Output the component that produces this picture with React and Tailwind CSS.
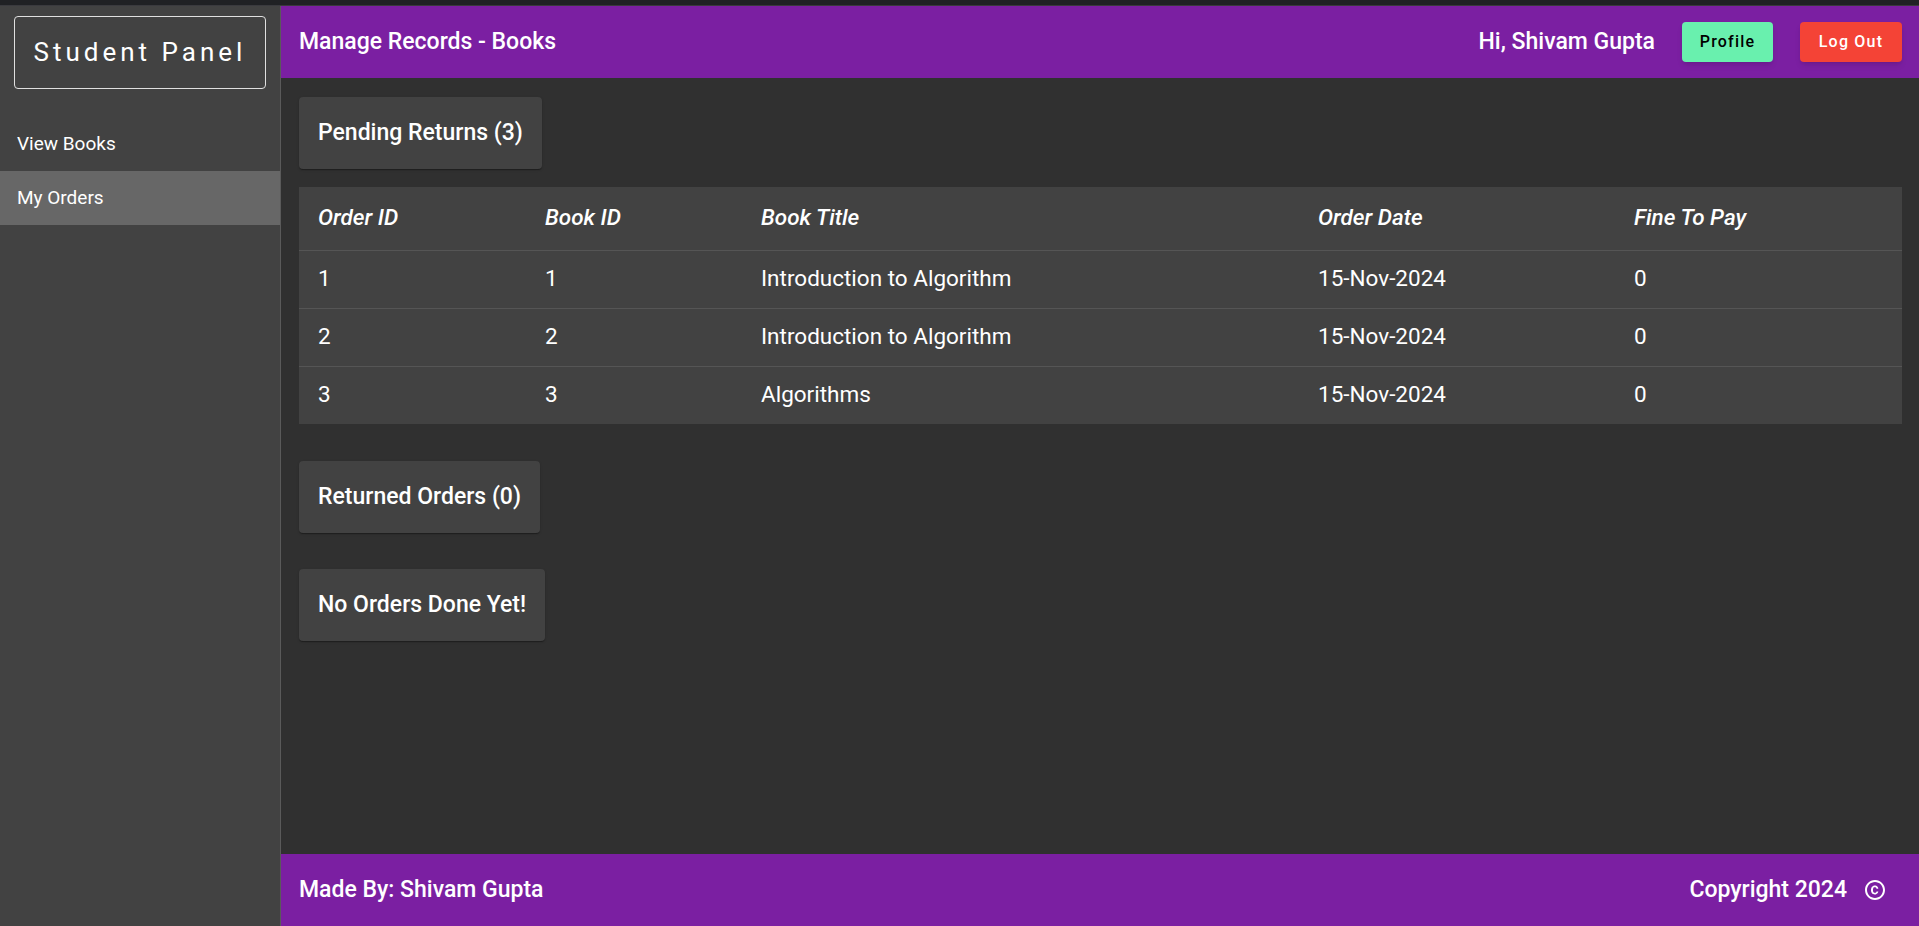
import React from 'react';

const orders = [
  { orderId: 1, bookId: 1, title: 'Introduction to Algorithm', date: '15-Nov-2024', fine: 0 },
  { orderId: 2, bookId: 2, title: 'Introduction to Algorithm', date: '15-Nov-2024', fine: 0 },
  { orderId: 3, bookId: 3, title: 'Algorithms', date: '15-Nov-2024', fine: 0 },
];

function CopyrightIcon() {
  return (
    <svg viewBox="0 0 24 24" className="w-6 h-6" fill="currentColor">
      <path d="M10.08 10.86c.05-.33.16-.62.3-.87s.34-.46.59-.62c.24-.15.54-.22.91-.23.23.01.44.05.63.13.2.09.38.21.52.36s.25.33.34.53.13.42.14.64h1.79c-.02-.47-.11-.9-.28-1.29s-.4-.73-.7-1.01-.66-.5-1.08-.66-.88-.23-1.39-.23c-.65 0-1.22.11-1.7.34s-.88.53-1.2.92-.56.84-.71 1.36S8 11.29 8 11.87v.27c0 .58.08 1.12.23 1.64s.39.97.71 1.35.72.69 1.2.91c.48.22 1.05.34 1.7.34.47 0 .91-.08 1.32-.23s.77-.36 1.08-.63.56-.58.74-.94.29-.74.3-1.15h-1.79c-.01.21-.06.4-.15.58s-.21.33-.36.46-.32.23-.52.3c-.19.07-.39.09-.6.1-.36-.01-.66-.08-.89-.23-.25-.16-.45-.37-.59-.62s-.25-.55-.3-.88-.08-.67-.08-1v-.27c0-.35.03-.68.08-1.01zM12 2C6.48 2 2 6.48 2 12s4.48 10 10 10 10-4.48 10-10S17.52 2 12 2zm0 18c-4.41 0-8-3.59-8-8s3.59-8 8-8 8 3.59 8 8-3.59 8-8 8z" />
    </svg>
  );
}

function Sidebar() {
  return (
    <aside className="w-[281px] shrink-0 bg-[#424242] border-r border-[#5a5a5a] flex flex-col">
      <div className="mx-[14px] mt-[10px] h-[73px] border border-[#e0e0e0] rounded-[4px] flex items-center justify-center">
        <span className="text-white text-[26px] tracking-[4px]">Student Panel</span>
      </div>
      <nav className="mt-[28px] flex flex-col">
        <a className="h-[54px] flex items-center pl-[17px] text-white text-[19px]">View Books</a>
        <a className="h-[54px] flex items-center pl-[17px] text-white text-[19px] bg-[#676767]">My Orders</a>
      </nav>
    </aside>
  );
}

function Header() {
  return (
    <header className="h-[72px] shrink-0 bg-[#7b1fa2] flex items-center pl-[18px] pr-[17px]">
      <h1 className="text-white text-[23px] font-medium">Manage Records - Books</h1>
      <div className="ml-auto flex items-center gap-[27px]">
        <span className="text-white text-[23px] font-medium">Hi, Shivam Gupta</span>
        <button className="h-10 w-[91px] rounded-[4px] bg-[#69f0ae] text-black text-base font-medium tracking-[1.2px] shadow-md">
          Profile
        </button>
        <button className="h-10 w-[102px] rounded-[4px] bg-[#f44336] text-white text-base font-medium tracking-[1.2px] shadow-md">
          Log Out
        </button>
      </div>
    </header>
  );
}

function Card({ children }) {
  return (
    <div className="self-start h-[72px] px-[19px] flex items-center bg-[#424242] rounded-[4px] shadow-[0_2px_1px_-1px_rgba(0,0,0,0.2),0_1px_1px_0_rgba(0,0,0,0.14),0_1px_3px_0_rgba(0,0,0,0.12)]">
      <span className="text-white text-[23px] font-medium">{children}</span>
    </div>
  );
}

function OrdersTable() {
  const cols = ['w-[227px]', 'w-[216px]', 'w-[557px]', 'w-[316px]', ''];
  const heads = ['Order ID', 'Book ID', 'Book Title', 'Order Date', 'Fine To Pay'];
  return (
    <table className="w-full bg-[#424242] text-white text-[22.5px] border-collapse table-fixed">
      <thead>
        <tr className="h-[63px] border-b border-[#555555]">
          {heads.map((h, i) => (
            <th key={h} className={`${cols[i]} text-left pl-[19px] italic font-medium`}>{h}</th>
          ))}
        </tr>
      </thead>
      <tbody>
        {orders.map((o, i) => (
          <tr key={o.orderId} className={`h-[58px] ${i < orders.length - 1 ? 'border-b border-[#555555]' : ''}`}>
            <td className="pl-[19px]">{o.orderId}</td>
            <td className="pl-[19px]">{o.bookId}</td>
            <td className="pl-[19px]">{o.title}</td>
            <td className="pl-[19px]">{o.date}</td>
            <td className="pl-[19px]">{o.fine}</td>
          </tr>
        ))}
      </tbody>
    </table>
  );
}

export default function App() {
  return (
    <div className="h-[926px] flex flex-col bg-[#303030] overflow-hidden" style={{ fontFamily: 'Roboto, "Liberation Sans", sans-serif' }}>
      <div className="h-[6px] shrink-0 bg-[#202124] border-b border-[#3a3a3e]" />
      <div className="flex flex-1 min-h-0">
        <Sidebar />
        <div className="flex-1 flex flex-col min-w-0">
          <Header />
          <main className="flex-1 flex flex-col pl-[18px] pr-[17px] pt-[19px]">
            <Card>Pending Returns (3)</Card>
            <div className="mt-[18px]">
              <OrdersTable />
            </div>
            <div className="mt-[37px] flex flex-col">
              <Card>Returned Orders (0)</Card>
            </div>
            <div className="mt-[36px] flex flex-col">
              <Card>No Orders Done Yet!</Card>
            </div>
          </main>
          <footer className="h-[72px] shrink-0 bg-[#7b1fa2] flex items-center pl-[18px] pr-[32px] text-white">
            <span className="text-[23px] font-medium">Made By: Shivam Gupta</span>
            <span className="ml-auto text-[23px] font-medium">Copyright 2024</span>
            <span className="ml-[16px]"><CopyrightIcon /></span>
          </footer>
        </div>
      </div>
    </div>
  );
}
